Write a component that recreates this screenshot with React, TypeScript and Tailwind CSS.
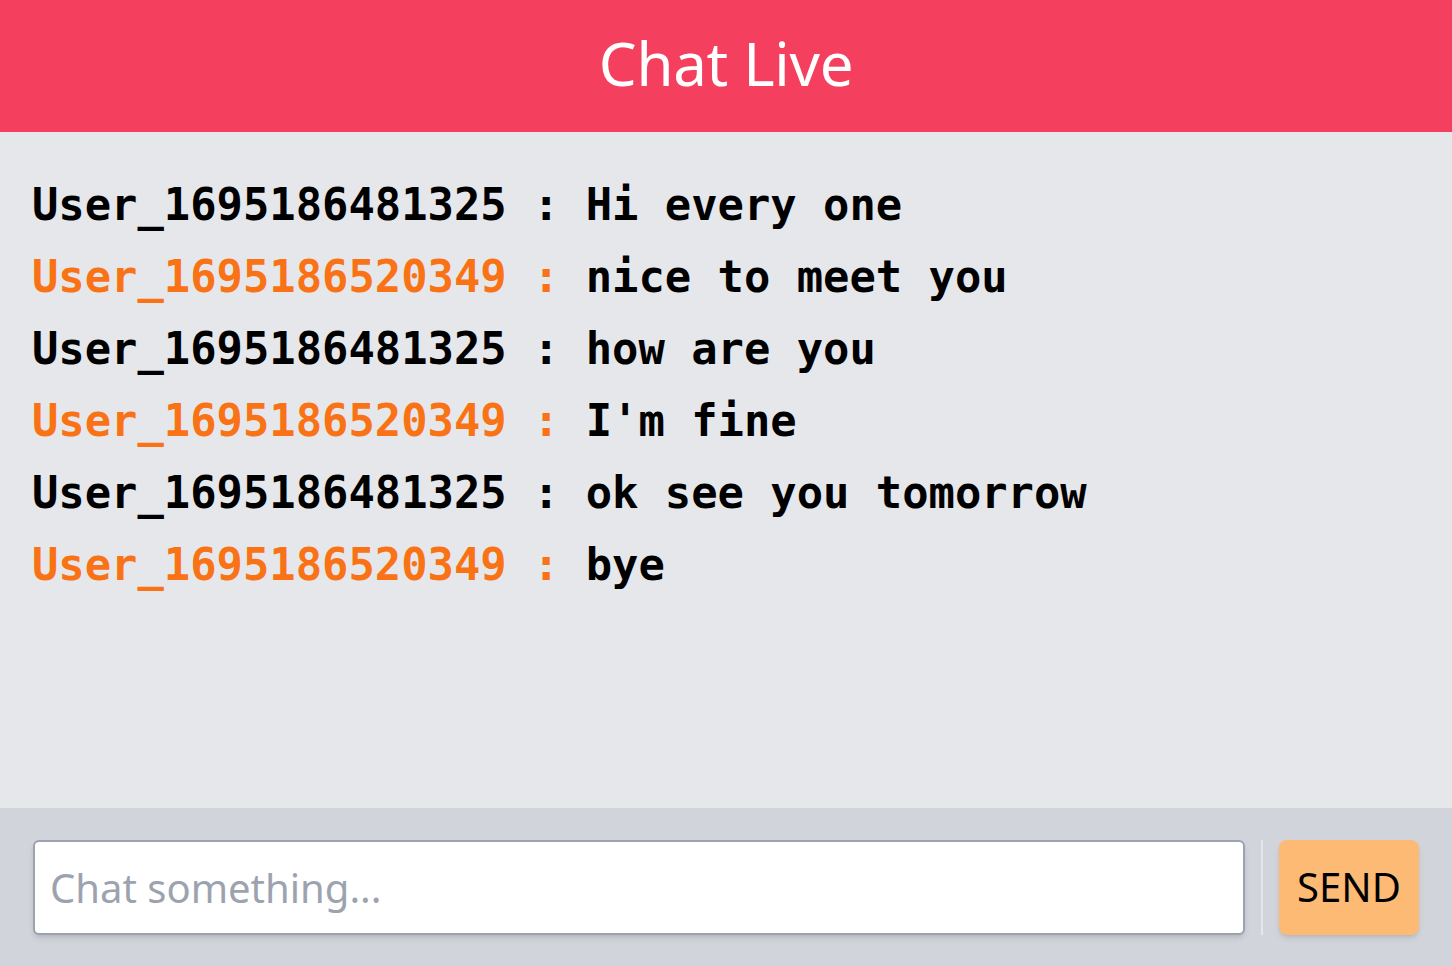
import { useState } from 'react';

type Message = {
  user: string;
  text: string;
};

const ME = 'User_1695186481325';

const initialMessages: Message[] = [
  { user: 'User_1695186481325', text: 'Hi every one' },
  { user: 'User_1695186520349', text: 'nice to meet you' },
  { user: 'User_1695186481325', text: 'how are you' },
  { user: 'User_1695186520349', text: "I'm fine" },
  { user: 'User_1695186481325', text: 'ok see you tomorrow' },
  { user: 'User_1695186520349', text: 'bye' },
];

const App = () => {
  const [messages, setMessages] = useState<Message[]>(initialMessages);
  const [input, setInput] = useState('');

  const send = () => {
    if (!input.trim()) return;
    setMessages([...messages, { user: ME, text: input }]);
    setInput('');
  };

  return (
    <div className="flex flex-col h-screen w-full font-['Noto_Sans',sans-serif]">
      <header className="h-[132px] shrink-0 bg-[#f43f5e] flex items-center justify-center pb-[6px]">
        <h1 className="text-white text-[60px] leading-none font-normal tracking-[-0.3px]">Chat Live</h1>
      </header>

      <div className="flex-1 bg-[#e5e7eb] px-[32px] pt-[37px] overflow-auto">
        {messages.map((m, i) => (
          <div
            key={i}
            className="font-['DejaVu_Sans_Mono',monospace] font-bold text-[43.8px] leading-[72px] whitespace-pre text-black"
          >
            <span className={m.user === ME ? 'text-black' : 'text-[#f97316]'}>{m.user} : </span>
            {m.text}
          </div>
        ))}
      </div>

      <footer className="h-[158px] shrink-0 bg-[#d1d5db] flex items-center px-[33px] gap-[16px]">
        <input
          value={input}
          onChange={(e) => setInput(e.target.value)}
          onKeyDown={(e) => e.key === 'Enter' && send()}
          placeholder="Chat something..."
          className="flex-1 min-w-0 h-[95px] bg-white border-2 border-[#9ca3af] rounded-md shadow-md px-[15px] text-[40px] text-black placeholder:text-[#9ca3af] outline-none"
        />
        <div className="w-[2px] h-[95px] bg-[#e5e7eb]" />
        <button
          onClick={send}
          className="w-[140px] h-[95px] shrink-0 bg-[#fdba74] rounded-lg shadow-md text-black text-[40px] leading-none"
        >
          SEND
        </button>
      </footer>
    </div>
  );
};

export default App;
